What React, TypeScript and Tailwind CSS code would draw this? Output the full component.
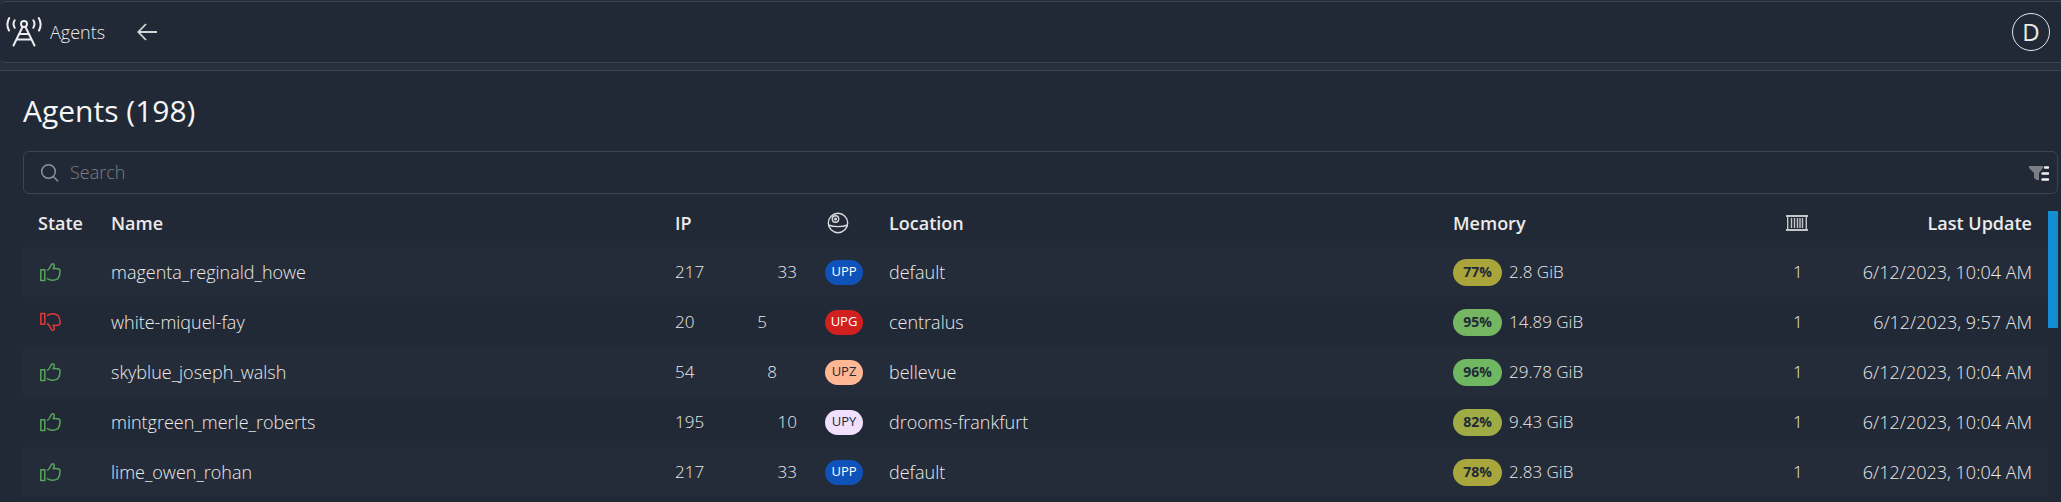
import clsx from 'clsx';

type Agent = {
  name: string;
  up: boolean;
  ipStart: string;
  ipEnd: string;
  ipWidth: string;
  group: string;
  groupColor: string;
  location: string;
  percent: number;
  percentColor: string;
  memory: string;
  containers: number;
  updated: string;
};

const agents: Agent[] = [
  {
    name: 'magenta_reginald_howe', up: true, ipStart: '217', ipEnd: '33', ipWidth: 'w-[122px]',
    group: 'UPP', groupColor: 'bg-[#0f52ba] text-white', location: 'default',
    percent: 77, percentColor: 'bg-[#aaa53b]', memory: '2.8 GiB', containers: 1, updated: '6/12/2023, 10:04 AM',
  },
  {
    name: 'white-miquel-fay', up: false, ipStart: '20', ipEnd: '5', ipWidth: 'w-[92px]',
    group: 'UPG', groupColor: 'bg-[#d21f1f] text-white', location: 'centralus',
    percent: 95, percentColor: 'bg-[#75b662]', memory: '14.89 GiB', containers: 1, updated: '6/12/2023, 9:57 AM',
  },
  {
    name: 'skyblue_joseph_walsh', up: true, ipStart: '54', ipEnd: '8', ipWidth: 'w-[102px]',
    group: 'UPZ', groupColor: 'bg-[#ffb693] text-[#222936]', location: 'bellevue',
    percent: 96, percentColor: 'bg-[#70b762]', memory: '29.78 GiB', containers: 1, updated: '6/12/2023, 10:04 AM',
  },
  {
    name: 'mintgreen_merle_roberts', up: true, ipStart: '195', ipEnd: '10', ipWidth: 'w-[122px]',
    group: 'UPY', groupColor: 'bg-[#f0e0fd] text-[#222936]', location: 'drooms-frankfurt',
    percent: 82, percentColor: 'bg-[#9fab45]', memory: '9.43 GiB', containers: 1, updated: '6/12/2023, 10:04 AM',
  },
  {
    name: 'lime_owen_rohan', up: true, ipStart: '217', ipEnd: '33', ipWidth: 'w-[122px]',
    group: 'UPP', groupColor: 'bg-[#0f52ba] text-white', location: 'default',
    percent: 78, percentColor: 'bg-[#a8a63c]', memory: '2.83 GiB', containers: 1, updated: '6/12/2023, 10:04 AM',
  },
];

function AntennaIcon() {
  return (
    <svg className="h-8 w-9" viewBox="0 0 36 32" fill="none" stroke="#ececee" strokeWidth="2" strokeLinecap="round">
      <circle cx="18" cy="8" r="3" />
      <path d="M16.500 11 7.500 29.500M19.500 11l9 18.500M14 18h8M11 23.500h14" />
      <path d="M3.200 2C.9 6 .9 10.500 3 14.500M32.800 2c2.300 4 2.300 8.500.2 12.500" />
      <path d="M8.700 4.300c-1.500 2.300-1.500 5 0 7.500M27.300 4.300c1.500 2.300 1.500 5 0 7.500" />
    </svg>
  );
}

function ArrowIcon() {
  return (
    <svg className="h-5 w-5" viewBox="0 0 20 20" fill="none" stroke="#d4d4d6" strokeWidth="1.800">
      <path d="M9 2 1.300 10 9 18M1 10h19" />
    </svg>
  );
}

function SearchIcon() {
  return (
    <svg className="h-5 w-5 shrink-0" viewBox="0 0 20 20" fill="none" stroke="#8995a3" strokeWidth="1.500">
      <circle cx="8.500" cy="8.500" r="6.800" />
      <path d="m13.300 13.500 4.700 4.700" />
    </svg>
  );
}

function FilterIcon() {
  return (
    <svg className="h-5 w-6" viewBox="0 0 24 20">
      <path d="M2 3h14v2l-4 5v7H9.500L7 15v-5L2 5z" fill="#7a7e87" />
      <path d="M18 4.500h3M15.500 10.500H21M15.500 16.500H21" stroke="#f0f0f0" strokeWidth="2.400" strokeLinecap="round" />
    </svg>
  );
}

function StateIcon({ up }: { up: boolean }) {
  return (
    <svg
      className={clsx('h-5 w-[22px]', !up && '-scale-y-100')}
      viewBox="0 0 22 20"
      fill="none"
      stroke={up ? '#58a55c' : '#e03a36'}
      strokeWidth="1.500"
      strokeLinejoin="round"
      role="img"
      aria-label={up ? 'Up' : 'Down'}
    >
      <path d="M1.800 7.800h4v10.600h-4z" />
      <path d="M8.200 8.500c2.200-1.200 2.800-3.300 4-5.600.6-1.400 2.600-1.600 3 .1.200 1.400-.8 2.400-1 3.700 2.400-.3 4.300-.2 6 .6.900.5 1 1.400.7 2.300.200 2.200-.5 4.900-1.900 7-3.300 2-7.900 2-11-.3" />
    </svg>
  );
}

function GroupIcon() {
  return (
    <svg className="h-[22px] w-[22px]" viewBox="0 0 22 22" fill="none" stroke="#d8dadd" strokeWidth="1.400" role="img" aria-label="Group">
      <circle cx="11" cy="11" r="9.700" />
      <circle cx="8.500" cy="7" r="3.200" />
      <circle cx="8.500" cy="7" r=".8" />
      <path d="M1.300 13c5.500 2.200 13.900 2.200 19.400 0" />
    </svg>
  );
}

function ContainerIcon() {
  return (
    <svg className="h-[18px] w-[22px]" viewBox="0 0 22 18" fill="none" stroke="#c4c6c9" role="img" aria-label="Containers">
      <path d="M0 2h22M0 16h22" strokeWidth="1.800" />
      <path d="M1.700 2v14M20.300 2v14M5.500 4v10M8.500 4v10M11.500 4v10M14 4v10M16.500 4v10" strokeWidth="1.400" />
    </svg>
  );
}

export default function App() {
  return (
    <div className="flex min-h-screen flex-col bg-[#272f3d] pt-px font-['Open_Sans','Noto_Sans',sans-serif] font-light text-[#eaeaea]">
      <header className="flex h-[62px] items-center rounded-l-md border-y border-[#3a464e] bg-[#222936] pr-[11px] pl-1.5">
        <AntennaIcon />
        <span className="ml-2 text-[18px]">Agents</span>
        <button type="button" aria-label="Back" className="ml-8">
          <ArrowIcon />
        </button>
        <button
          type="button"
          className="ml-auto flex h-[38px] w-[38px] items-center justify-center rounded-full border border-[#e6e6e6] text-2xl font-normal"
        >
          D
        </button>
      </header>

      <main className="mt-[7px] flex-1 border-t border-[#3a464e] bg-[#222936] pr-[3px] pb-[5px] pl-[23px]">
        <h1 className="pt-[19px] text-[30px] leading-[42px] font-normal text-[#f5f5f5]">Agents (198)</h1>

        <div className="mt-[19px] flex h-[43px] items-center rounded-md border border-[#3a464e] pr-1.5 pl-4">
          <SearchIcon />
          <input
            type="search"
            aria-label="Search"
            placeholder="Search"
            className="ml-2.5 flex-1 bg-transparent text-[18px] outline-none placeholder:text-[#7d7d80]"
          />
          <button type="button" aria-label="Filter">
            <FilterIcon />
          </button>
        </div>

        <div className="flex pt-0.5">
          <div className="flex-1">
            <table className="w-full table-fixed border-collapse text-left text-[17px]">
              <colgroup>
                <col className="w-[88px]" />
                <col />
                <col className="w-[150px]" />
                <col className="w-16" />
                <col />
                <col className="w-[333px]" />
                <col className="w-12" />
                <col className="w-[214px]" />
              </colgroup>
              <thead>
                <tr className="h-[51px] text-[18px]">
                  <th className="pt-1 pl-[15px] font-semibold">State</th>
                  <th className="pt-1 font-semibold">Name</th>
                  <th className="pt-1 font-semibold">IP</th>
                  <th className="pt-0.5 pl-0.5"><GroupIcon /></th>
                  <th className="pt-1 font-semibold">Location</th>
                  <th className="pt-1 font-semibold">Memory</th>
                  <th className="pt-0.5"><ContainerIcon /></th>
                  <th className="pt-1 pr-4 text-right font-semibold">Last Update</th>
                </tr>
              </thead>
              <tbody>
                {agents.map((agent, i) => (
                  <tr key={i} className="h-[50px] odd:bg-[#252c39]">
                    <td className="pl-4"><StateIcon up={agent.up} /></td>
                    <td className="text-[18px]">{agent.name}</td>
                    <td>
                      <span className={clsx('flex justify-between', agent.ipWidth)}>
                        <span>{agent.ipStart}</span>
                        <span>{agent.ipEnd}</span>
                      </span>
                    </td>
                    <td>
                      <span className={clsx('flex h-[25px] w-[38px] items-center justify-center rounded-full text-[13px] font-normal', agent.groupColor)}>
                        {agent.group}
                      </span>
                    </td>
                    <td className="text-[18px]">{agent.location}</td>
                    <td>
                      <span className="flex items-center gap-[7px]">
                        <span className={clsx('flex h-[27px] w-[49px] items-center justify-center rounded-full text-sm font-bold text-[#222936]', agent.percentColor)}>
                          {agent.percent}%
                        </span>
                        {agent.memory}
                      </span>
                    </td>
                    <td className="pl-[7px]">{agent.containers}</td>
                    <td className="pr-4 text-right text-[18px]">{agent.updated}</td>
                  </tr>
                ))}
              </tbody>
            </table>
          </div>
          <div className="mt-[15px] h-[117px] w-2.5 bg-[#138dd3]" />
        </div>
      </main>
    </div>
  );
}
